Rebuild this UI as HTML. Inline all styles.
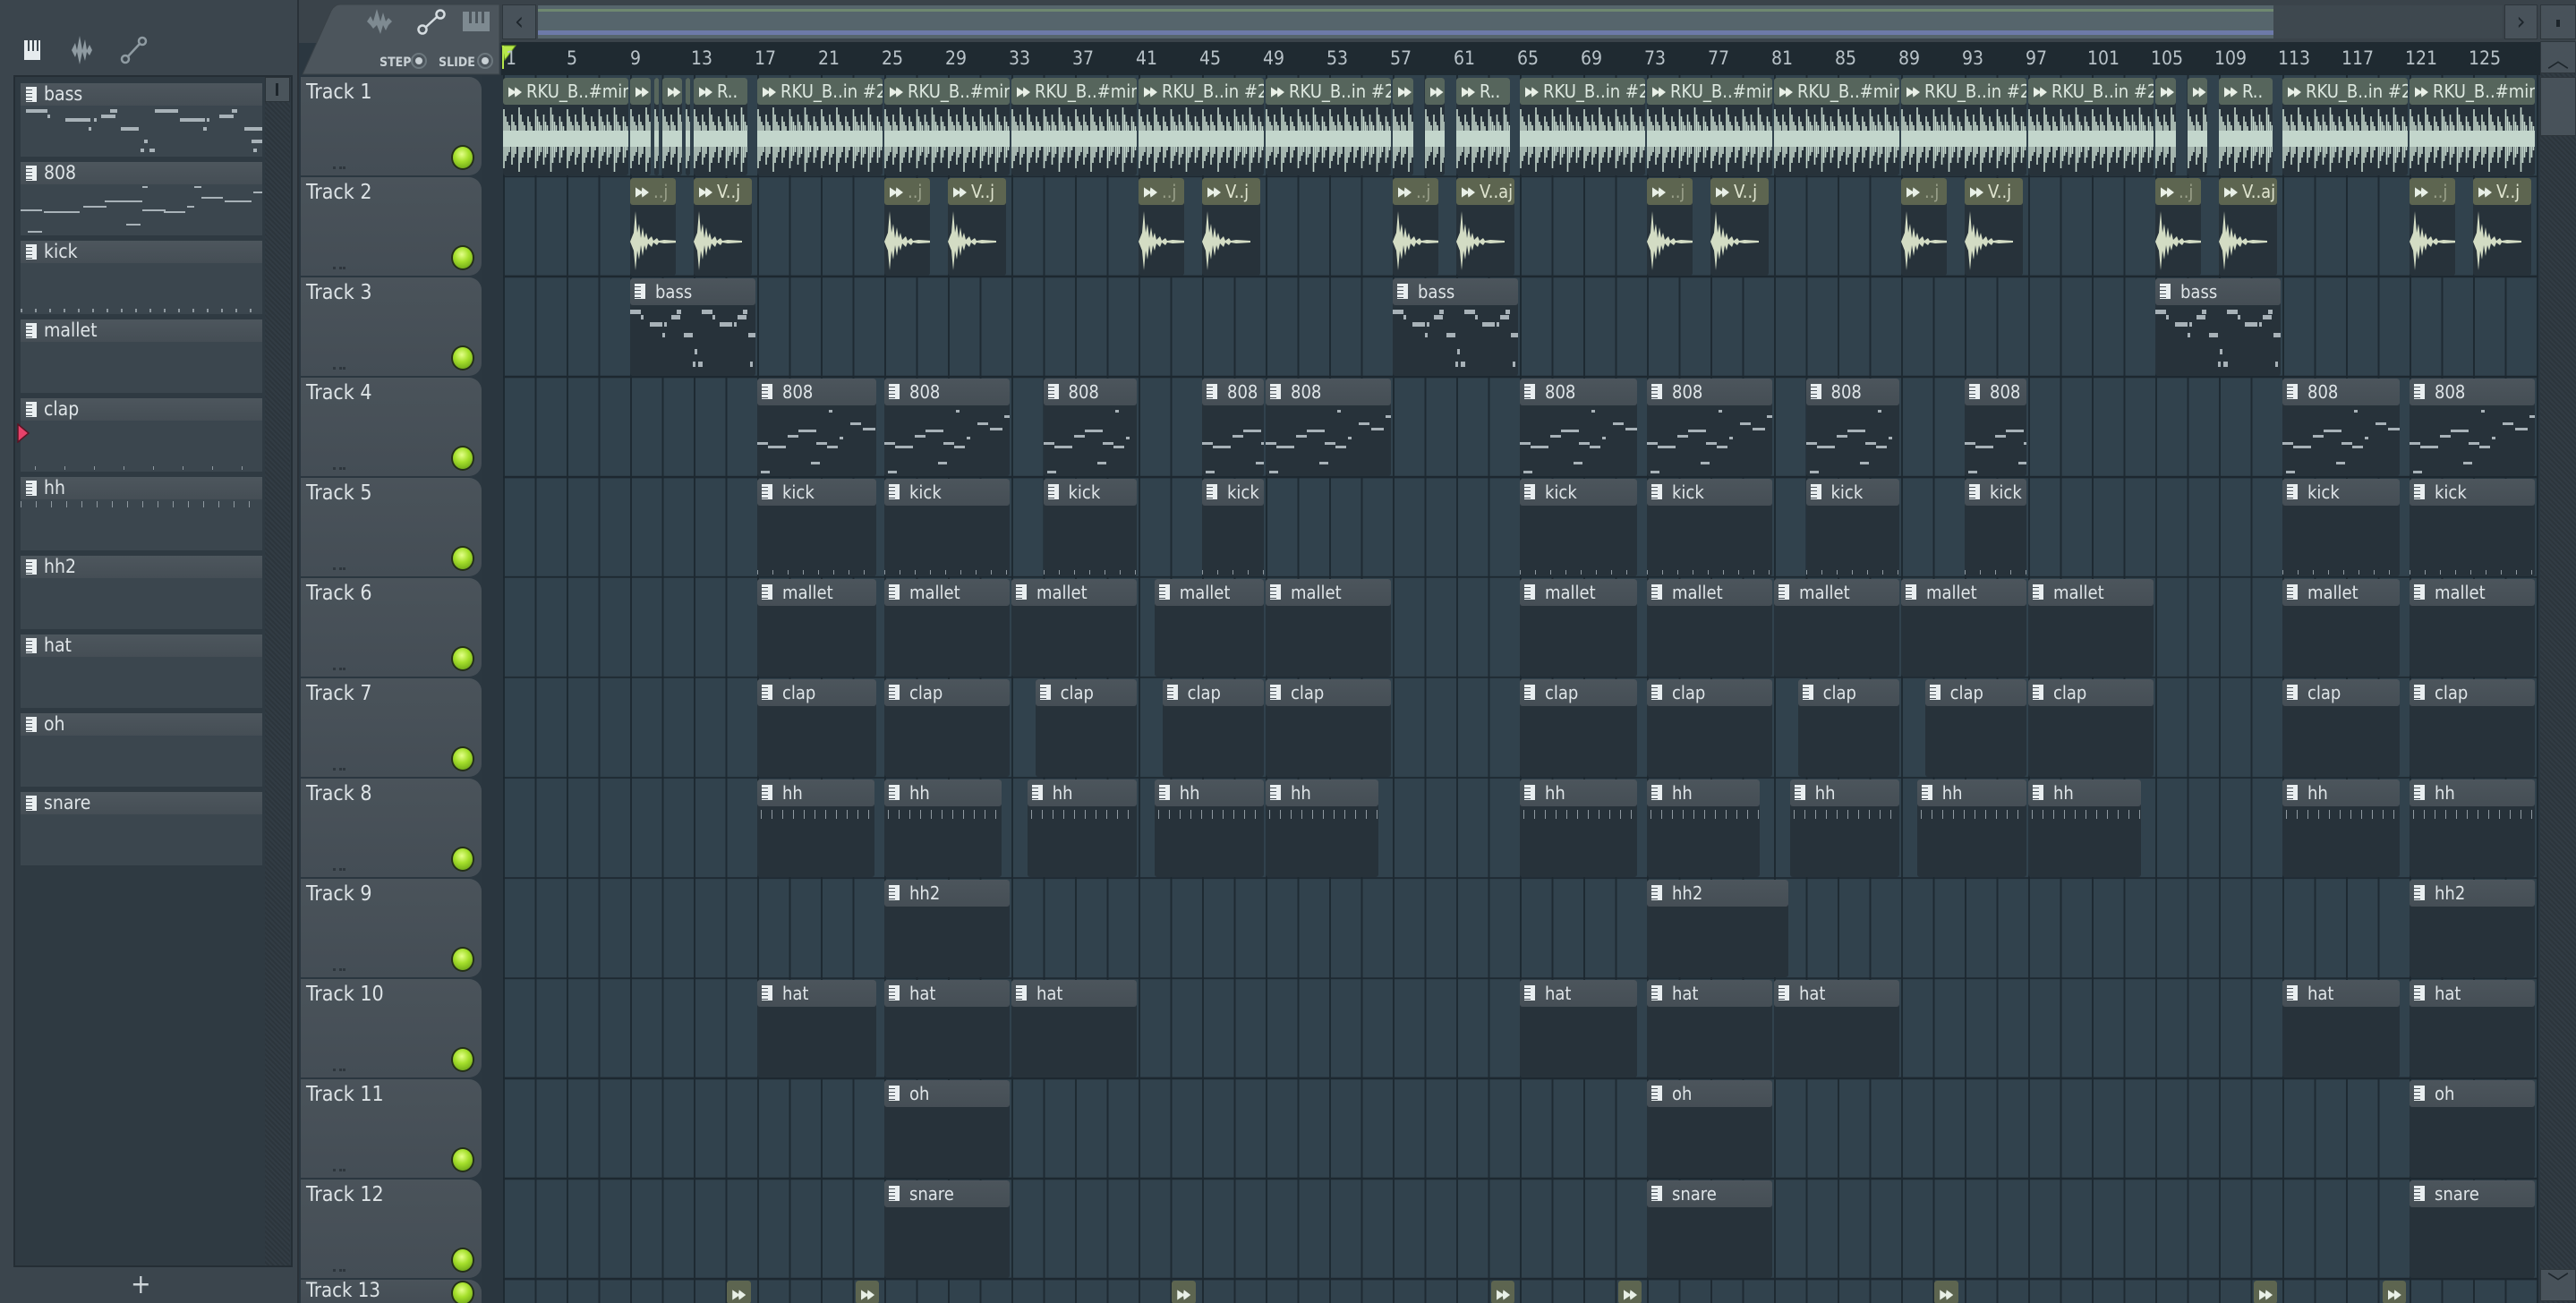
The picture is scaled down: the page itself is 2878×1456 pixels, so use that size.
<!DOCTYPE html>
<html style="margin:0;width:2878px;height:1456px;overflow:hidden"><head><meta charset="utf-8"><style>
*{box-sizing:border-box}
body{margin:0;width:2878px;height:1456px;background:#2b3740;overflow:hidden;position:relative;font-family:"DejaVu Sans Condensed","Liberation Sans",sans-serif;color:#d6dde1}
.ab{position:absolute}
#top{left:0;top:0;width:2878px;height:48px;background:#3a434a}
#leftp{left:0;top:0;width:334px;height:1456px;background:#3b454d;border-right:2px solid #2a3138}
#list{left:15px;top:84px;width:312px;height:1332px;background:#2f3a42;border:2px solid #252e35}
.it{position:absolute;left:6px;width:270px;height:82px;background:#3b464e}
.it .h{height:25px;background:linear-gradient(#4d565d,#454e55);font-size:21px;line-height:25px;padding-left:26px;position:relative;color:#dfe5e8}
.ic{position:absolute;left:6px;top:4px;width:12px;height:17px;background:repeating-linear-gradient(180deg,#e9eef0 0 3px,#4a535a 3px 4px);border-right:5px solid #e9eef0}
#lsb{left:296px;top:86px;width:28px;height:1328px;background:repeating-linear-gradient(45deg,#323c44 0 2px,#2c353c 2px 4px)}
#grid{left:562px;top:84px;width:2274px;height:1372px;background:
repeating-linear-gradient(180deg,transparent 0 110px,#1d2830 110px 112px),
repeating-linear-gradient(90deg,#1e2a32 0 2px,transparent 2px 35.5px),#31424d;background-position:0 2px,0 0,0 0}
#gcol{left:538px;top:84px;width:24px;height:1372px;background:#2a363f}
#ruler{left:560px;top:47px;width:2278px;height:37px;background:#1f2a31}
.n{position:absolute;top:6px;font-size:21px;color:#b8c2c8}
.th{position:absolute;left:336px;width:202px;height:110px;background:linear-gradient(#4a535a,#444d55);border-radius:0 14px 14px 0;overflow:hidden}
.th span{position:absolute;left:6px;top:4px;font-size:23px;color:#dde3e6}
.th i{position:absolute;left:36px;bottom:7px;width:14px;height:3px;border-left:3px solid #2e363d;border-right:3px solid #2e363d;background:linear-gradient(90deg,transparent 4px,#2e363d 4px 7px,transparent 7px)}
.th b{position:absolute;left:170px;bottom:8px;width:22px;height:24px;border-radius:50%;background:radial-gradient(circle at 45% 35%,#e4ff8a 0,#a6e02c 40%,#5c9410 100%);box-shadow:0 0 0 2px #243018}
.r{position:absolute;left:0;width:2878px;height:112px}
.c{position:absolute;top:1px;height:109px;left:calc(562px + var(--s)*17.75px);width:calc(var(--l)*17.75px - 2px);background:#27323a;border-radius:3px;overflow:hidden}
.c .h{height:30px;background:linear-gradient(#4c555c,#454e55);font-size:20px;line-height:30px;padding-left:28px;white-space:nowrap;position:relative;color:#dfe5e8;border-radius:3px}
.c .h .ic{left:5px;top:6px}
.a .h{background:#56655c;padding-left:6px;color:#dde8e0}
.o .h{background:#5d6550;padding-left:6px;color:#dfe4cf}
.o .h em{font-style:normal;color:#9aa08a}
.ar{display:inline-block;width:15px;height:14px;background:#e8efe6;margin-right:5px;vertical-align:-1px;clip-path:polygon(0 10%,45% 42%,50% 10%,100% 50%,50% 90%,45% 58%,0 90%)}
svg.w{position:absolute;left:0;top:31px}
.nb{position:absolute;left:0;top:31px}
.tk{position:absolute;left:0;bottom:2px;width:100%;height:5px;background:repeating-linear-gradient(90deg,#8f99a0 0 1px,transparent 1px 17px)}
.tt{position:absolute;left:4px;top:34px;width:100%;height:10px;background:repeating-linear-gradient(90deg,#8f99a0 0 1px,transparent 1px 12px)}
</style></head><body>
<svg width="0" height="0" style="position:absolute">
<defs>
<pattern id="wv" width="35.5" height="80" patternUnits="userSpaceOnUse">
<rect x="0" y="28" width="35.5" height="18" fill="#c3d6cc"/>
<g stroke="#c3d6cc" stroke-width="1.6">
<line x1="1" y1="4" x2="1" y2="70"/><line x1="3" y1="12" x2="3" y2="62"/><line x1="5" y1="18" x2="5" y2="56"/><line x1="7" y1="22" x2="7" y2="52"/>
<line x1="10" y1="10" x2="10" y2="66"/><line x1="12" y1="18" x2="12" y2="58"/><line x1="14" y1="22" x2="14" y2="54"/>
<line x1="18" y1="2" x2="18" y2="74"/><line x1="20" y1="10" x2="20" y2="64"/><line x1="22" y1="18" x2="22" y2="58"/><line x1="24" y1="22" x2="24" y2="52"/>
<line x1="28" y1="12" x2="28" y2="64"/><line x1="30" y1="18" x2="30" y2="58"/><line x1="32" y1="23" x2="32" y2="50"/></g>
</pattern>
<symbol id="burst" viewBox="0 0 54 76"><path d="M0 40 L4 30 L6 6 L8 30 L10 20 L12 36 L14 24 L16 36 L18 30 L20 38 L24 34 L26 39 L30 36 L32 39 L38 38 L54 39 L54 41 L38 42 L32 41 L30 44 L26 41 L24 46 L20 42 L18 50 L16 44 L14 56 L12 44 L10 60 L8 50 L6 72 L4 50 Z" fill="#d3dcc4"/></symbol>
<symbol id="bn" viewBox="0 0 140 78"><g fill="#a8b2b8"><rect x="0" y="4" width="12" height="5"/><rect x="12" y="10" width="3" height="5"/><rect x="22" y="18" width="14" height="5"/><rect x="38" y="18" width="3" height="5"/><rect x="36" y="30" width="3" height="5"/><rect x="46" y="10" width="10" height="5"/><rect x="52" y="4" width="5" height="5"/><rect x="60" y="30" width="10" height="5"/><rect x="72" y="48" width="3" height="6"/><rect x="70" y="62" width="3" height="6"/><rect x="76" y="62" width="5" height="6"/><rect x="80" y="4" width="12" height="5"/><rect x="92" y="10" width="3" height="5"/><rect x="100" y="18" width="14" height="5"/><rect x="116" y="18" width="3" height="5"/><rect x="120" y="10" width="10" height="5"/><rect x="126" y="4" width="5" height="5"/><rect x="132" y="30" width="8" height="5"/><rect x="134" y="62" width="3" height="6"/></g></symbol>
<symbol id="en" viewBox="0 0 140 78"><g fill="#a8b2b8"><rect x="0" y="40" width="12" height="3"/><rect x="12" y="44" width="20" height="3"/><rect x="34" y="32" width="12" height="3"/><rect x="46" y="26" width="20" height="3"/><rect x="66" y="40" width="12" height="3"/><rect x="78" y="44" width="12" height="3"/><rect x="92" y="34" width="4" height="3"/><rect x="104" y="18" width="12" height="3"/><rect x="118" y="24" width="14" height="3"/><rect x="134" y="10" width="6" height="3"/><rect x="60" y="62" width="10" height="3"/><rect x="4" y="72" width="10" height="3"/><rect x="80" y="4" width="4" height="3"/></g></symbol>
</defs></svg>

<div class="ab" id="top"></div>
<div class="ab" style="left:601px;top:6px;width:1939px;height:37px;background:#56656c"></div>
<div class="ab" style="left:601px;top:34px;width:1939px;height:5px;background:#6d7aa8"></div>
<div class="ab" style="left:601px;top:10px;width:1939px;height:3px;background:#6f8870"></div>
<div class="ab" style="left:2540px;top:6px;width:256px;height:37px;background:#3e484f"></div>
<div class="ab" style="left:561px;top:5px;width:38px;height:39px;background:#48525a;border:1px solid #2e363c;font-size:28px;text-align:center;line-height:36px;color:#1d252b">‹</div>
<div class="ab" style="left:2798px;top:5px;width:37px;height:39px;background:#48525a;border:1px solid #2e363c;font-size:28px;text-align:center;line-height:36px;color:#1d252b">›</div>
<div class="ab" style="left:2838px;top:5px;width:40px;height:39px;background:#48525a;border:1px solid #2e363c"><div class="ab" style="left:17px;top:16px;width:4px;height:8px;background:#1d252b"></div></div>
<div class="ab" style="left:2838px;top:46px;width:40px;height:1410px;background:repeating-linear-gradient(45deg,#323c44 0 2px,#2c353c 2px 4px)"></div>
<div class="ab" style="left:2838px;top:46px;width:40px;height:36px;background:#48525a;border:1px solid #2e363c;text-align:center;font-size:24px;line-height:40px;color:#1d252b">︿</div>
<div class="ab" style="left:2838px;top:86px;width:40px;height:66px;background:#48525a;border:1px solid #2e363c"></div>
<div class="ab" style="left:2838px;top:1418px;width:40px;height:36px;background:#48525a;border:1px solid #2e363c;text-align:center;font-size:24px;line-height:30px;color:#1d252b">﹀</div>

<div class="ab" id="leftp"></div>
<svg class="ab" style="left:0;top:0" width="334" height="84">
<g fill="#e6ebee"><rect x="27" y="45" width="18" height="22"/></g>
<g fill="#3b454d"><rect x="31" y="45" width="2" height="12"/><rect x="36" y="45" width="2" height="12"/><rect x="41" y="45" width="2" height="12"/></g>
<path d="M80 56 L84 48 L86 56 L89 40 L92 56 L95 44 L97 56 L100 50 L103 56 L100 62 L97 58 L95 68 L92 58 L89 72 L86 58 L84 64 Z" fill="#8f9ba2"/>
<g stroke="#8f9ba2" stroke-width="2.5" fill="none"><circle cx="140" cy="66" r="4"/><circle cx="159" cy="46" r="4"/><line x1="143" y1="63" x2="156" y2="49"/></g>
</svg>
<svg class="ab" style="left:330px;top:0" width="232" height="86">
<path d="M50 5 L228 5 L228 83 L8 83 L40 12 Q44 5 50 5 Z" fill="#4c555c" stroke="#3a4248"/>
<path d="M80 24 L84 18 L87 24 L91 10 L95 24 L98 14 L101 24 L104 20 L108 24 L104 28 L101 34 L98 28 L95 38 L91 28 L87 32 L84 28 Z" fill="#7e8a91"/>
<g stroke="#d5dce0" stroke-width="2.5" fill="none"><circle cx="142" cy="33" r="4.5"/><circle cx="162" cy="16" r="4.5"/><line x1="146" y1="30" x2="158" y2="19"/></g>
<rect x="187" y="13" width="30" height="22" fill="#7e8a91"/><g fill="#4c555c"><rect x="194" y="13" width="3" height="13"/><rect x="201" y="13" width="3" height="13"/><rect x="208" y="13" width="3" height="13"/></g>
<text x="94" y="74" font-size="14" fill="#c8d0d4" font-family="DejaVu Sans Condensed,Liberation Sans,sans-serif" font-weight="bold">STEP</text>
<circle cx="138" cy="68" r="8" fill="none" stroke="#6c777d" stroke-width="2"/><circle cx="138" cy="68" r="4" fill="#c8d0d4"/>
<text x="160" y="74" font-size="14" fill="#c8d0d4" font-family="DejaVu Sans Condensed,Liberation Sans,sans-serif" font-weight="bold">SLIDE</text>
<circle cx="212" cy="68" r="8" fill="none" stroke="#6c777d" stroke-width="2"/><circle cx="212" cy="68" r="4" fill="#c8d0d4"/>
</svg>

<div class="ab" id="list">
<div class="it" style="top:7px"><div class="h"><s class="ic"></s>bass</div>
<svg width="270" height="57"><g fill="#a8b2b8"><rect x="6" y="4" width="24" height="4"/><rect x="30" y="10" width="3" height="4"/><rect x="50" y="14" width="28" height="4"/><rect x="82" y="14" width="3" height="4"/><rect x="76" y="24" width="3" height="4"/><rect x="90" y="10" width="16" height="4"/><rect x="100" y="4" width="8" height="4"/><rect x="112" y="24" width="20" height="4"/><rect x="138" y="38" width="4" height="4"/><rect x="134" y="48" width="4" height="4"/><rect x="144" y="48" width="6" height="4"/><rect x="150" y="4" width="26" height="4"/><rect x="178" y="14" width="28" height="4"/><rect x="208" y="14" width="3" height="4"/><rect x="204" y="24" width="4" height="4"/><rect x="222" y="10" width="16" height="4"/><rect x="236" y="4" width="6" height="4"/><rect x="250" y="24" width="20" height="4"/><rect x="258" y="38" width="12" height="4"/><rect x="260" y="48" width="4" height="4"/></g></svg></div>
<div class="it" style="top:95px"><div class="h"><s class="ic"></s>808</div>
<svg width="270" height="57"><g fill="#a8b2b8"><rect x="0" y="28" width="24" height="2"/><rect x="26" y="30" width="40" height="2"/><rect x="70" y="24" width="26" height="2"/><rect x="94" y="18" width="42" height="2"/><rect x="136" y="28" width="26" height="2"/><rect x="160" y="30" width="24" height="2"/><rect x="186" y="24" width="8" height="2"/><rect x="202" y="14" width="24" height="2"/><rect x="228" y="18" width="30" height="2"/><rect x="260" y="8" width="10" height="2"/><rect x="118" y="44" width="16" height="2"/><rect x="8" y="52" width="16" height="2"/><rect x="136" y="2" width="6" height="2"/><rect x="194" y="2" width="8" height="2"/></g></svg></div>
<div class="it" style="top:183px"><div class="h"><s class="ic"></s>kick</div><div style="position:absolute;left:0;bottom:2px;width:270px;height:4px;background:repeating-linear-gradient(90deg,#8f99a0 0 2px,transparent 2px 16px)"></div></div>
<div class="it" style="top:271px"><div class="h"><s class="ic"></s>mallet</div></div>
<div class="it" style="top:359px"><div class="h"><s class="ic"></s>clap</div><div style="position:absolute;left:0;bottom:2px;width:270px;height:4px;background:repeating-linear-gradient(90deg,transparent 0 16px,#8f99a0 16px 17px,transparent 17px 33px)"></div></div>
<div class="it" style="top:447px"><div class="h"><s class="ic"></s>hh</div><div style="position:absolute;left:0;top:27px;width:270px;height:7px;background:repeating-linear-gradient(90deg,#8f99a0 0 1px,transparent 1px 17px)"></div></div>
<div class="it" style="top:535px"><div class="h"><s class="ic"></s>hh2</div></div>
<div class="it" style="top:623px"><div class="h"><s class="ic"></s>hat</div></div>
<div class="it" style="top:711px"><div class="h"><s class="ic"></s>oh</div></div>
<div class="it" style="top:799px"><div class="h"><s class="ic"></s>snare</div></div>
</div>
<div class="ab" id="lsb"></div>
<div class="ab" style="left:296px;top:86px;width:28px;height:28px;background:#4a545b;border:1px solid #2a3238"><div class="ab" style="left:11px;top:6px;width:3px;height:14px;background:#1d252b"></div></div>
<svg class="ab" style="left:18px;top:473px" width="16" height="22"><path d="M2 1 L14 11 L2 21 Z" fill="#e8426a" stroke="#5a1424" stroke-width="1.5"/></svg>
<div class="ab" style="left:146px;top:1418px;font-size:30px;color:#cfd6da">+</div>

<div class="ab" id="gcol"></div>
<div class="ab" id="grid"></div>
<div class="ab" id="ruler">
<svg class="ab" style="left:0;top:2px" width="20" height="30"><path d="M1 2 L16 2 L4 18 Z" fill="#b7e84a" stroke="#6a9a20"/><rect x="1" y="2" width="2" height="26" fill="#b7e84a"/></svg>
<span class="n" style="left:5px">1</span><span class="n" style="left:73px">5</span><span class="n" style="left:144px">9</span><span class="n" style="left:212px">13</span><span class="n" style="left:283px">17</span><span class="n" style="left:354px">21</span><span class="n" style="left:425px">25</span><span class="n" style="left:496px">29</span><span class="n" style="left:567px">33</span><span class="n" style="left:638px">37</span><span class="n" style="left:709px">41</span><span class="n" style="left:780px">45</span><span class="n" style="left:851px">49</span><span class="n" style="left:922px">53</span><span class="n" style="left:993px">57</span><span class="n" style="left:1064px">61</span><span class="n" style="left:1135px">65</span><span class="n" style="left:1206px">69</span><span class="n" style="left:1277px">73</span><span class="n" style="left:1348px">77</span><span class="n" style="left:1419px">81</span><span class="n" style="left:1490px">85</span><span class="n" style="left:1561px">89</span><span class="n" style="left:1632px">93</span><span class="n" style="left:1703px">97</span><span class="n" style="left:1772px">101</span><span class="n" style="left:1843px">105</span><span class="n" style="left:1914px">109</span><span class="n" style="left:1985px">113</span><span class="n" style="left:2056px">117</span><span class="n" style="left:2127px">121</span><span class="n" style="left:2198px">125</span>
</div>

<div class="th" style="top:86px"><span>Track 1</span><i></i><b></b></div>
<div class="th" style="top:198px"><span>Track 2</span><i></i><b></b></div>
<div class="th" style="top:310px"><span>Track 3</span><i></i><b></b></div>
<div class="th" style="top:422px"><span>Track 4</span><i></i><b></b></div>
<div class="th" style="top:534px"><span>Track 5</span><i></i><b></b></div>
<div class="th" style="top:646px"><span>Track 6</span><i></i><b></b></div>
<div class="th" style="top:758px"><span>Track 7</span><i></i><b></b></div>
<div class="th" style="top:870px"><span>Track 8</span><i></i><b></b></div>
<div class="th" style="top:982px"><span>Track 9</span><i></i><b></b></div>
<div class="th" style="top:1094px"><span>Track 10</span><i></i><b></b></div>
<div class="th" style="top:1206px"><span>Track 11</span><i></i><b></b></div>
<div class="th" style="top:1318px"><span>Track 12</span><i></i><b></b></div>
<div class="th" style="top:1430px;height:26px;border-radius:0 14px 0 0"><span style="top:0;font-size:22px">Track 13</span><b style="bottom:auto;top:3px"></b></div>

<!-- Track 1 -->
<div class="r" style="top:86px">
<div class="c a" style="--s:0;--l:8"><div class="h"><s class="ar"></s>RKU_B..#min</div><svg class="w" width="200" height="80"><rect width="200" height="80" fill="url(#wv)"/></svg></div>
<div class="c a" style="--s:8;--l:1.4"><div class="h"><s class="ar"></s></div><svg class="w" width="200" height="80"><rect width="200" height="80" fill="url(#wv)"/></svg></div>
<div class="c a" style="--s:9.5;--l:0.4"><div class="h"></div><svg class="w" width="200" height="80"><rect width="200" height="80" fill="url(#wv)"/></svg></div>
<div class="c a" style="--s:10;--l:1.4"><div class="h"><s class="ar"></s></div><svg class="w" width="200" height="80"><rect width="200" height="80" fill="url(#wv)"/></svg></div>
<div class="c a" style="--s:11.5;--l:0.4"><div class="h"></div><svg class="w" width="200" height="80"><rect width="200" height="80" fill="url(#wv)"/></svg></div>
<div class="c a" style="--s:12;--l:3.5"><div class="h"><s class="ar"></s>R..</div><svg class="w" width="200" height="80"><rect width="200" height="80" fill="url(#wv)"/></svg></div>
<div class="c a" style="--s:16;--l:8"><div class="h"><s class="ar"></s>RKU_B..in #2</div><svg class="w" width="200" height="80"><rect width="200" height="80" fill="url(#wv)"/></svg></div>
<div class="c a" style="--s:24;--l:8"><div class="h"><s class="ar"></s>RKU_B..#min</div><svg class="w" width="200" height="80"><rect width="200" height="80" fill="url(#wv)"/></svg></div>
<div class="c a" style="--s:32;--l:8"><div class="h"><s class="ar"></s>RKU_B..#min</div><svg class="w" width="200" height="80"><rect width="200" height="80" fill="url(#wv)"/></svg></div>
<div class="c a" style="--s:40;--l:8"><div class="h"><s class="ar"></s>RKU_B..in #2</div><svg class="w" width="200" height="80"><rect width="200" height="80" fill="url(#wv)"/></svg></div>
<div class="c a" style="--s:48;--l:8"><div class="h"><s class="ar"></s>RKU_B..in #2</div><svg class="w" width="200" height="80"><rect width="200" height="80" fill="url(#wv)"/></svg></div>
<div class="c a" style="--s:56;--l:1.4"><div class="h"><s class="ar"></s></div><svg class="w" width="200" height="80"><rect width="200" height="80" fill="url(#wv)"/></svg></div>
<div class="c a" style="--s:58;--l:1.4"><div class="h"><s class="ar"></s></div><svg class="w" width="200" height="80"><rect width="200" height="80" fill="url(#wv)"/></svg></div>
<div class="c a" style="--s:60;--l:3.5"><div class="h"><s class="ar"></s>R..</div><svg class="w" width="200" height="80"><rect width="200" height="80" fill="url(#wv)"/></svg></div>
<div class="c a" style="--s:64;--l:8"><div class="h"><s class="ar"></s>RKU_B..in #2</div><svg class="w" width="200" height="80"><rect width="200" height="80" fill="url(#wv)"/></svg></div>
<div class="c a" style="--s:72;--l:8"><div class="h"><s class="ar"></s>RKU_B..#min</div><svg class="w" width="200" height="80"><rect width="200" height="80" fill="url(#wv)"/></svg></div>
<div class="c a" style="--s:80;--l:8"><div class="h"><s class="ar"></s>RKU_B..#min</div><svg class="w" width="200" height="80"><rect width="200" height="80" fill="url(#wv)"/></svg></div>
<div class="c a" style="--s:88;--l:8"><div class="h"><s class="ar"></s>RKU_B..in #2</div><svg class="w" width="200" height="80"><rect width="200" height="80" fill="url(#wv)"/></svg></div>
<div class="c a" style="--s:96;--l:8"><div class="h"><s class="ar"></s>RKU_B..in #2</div><svg class="w" width="200" height="80"><rect width="200" height="80" fill="url(#wv)"/></svg></div>
<div class="c a" style="--s:104;--l:1.4"><div class="h"><s class="ar"></s></div><svg class="w" width="200" height="80"><rect width="200" height="80" fill="url(#wv)"/></svg></div>
<div class="c a" style="--s:106;--l:1.4"><div class="h"><s class="ar"></s></div><svg class="w" width="200" height="80"><rect width="200" height="80" fill="url(#wv)"/></svg></div>
<div class="c a" style="--s:108;--l:3.5"><div class="h"><s class="ar"></s>R..</div><svg class="w" width="200" height="80"><rect width="200" height="80" fill="url(#wv)"/></svg></div>
<div class="c a" style="--s:112;--l:8"><div class="h"><s class="ar"></s>RKU_B..in #2</div><svg class="w" width="200" height="80"><rect width="200" height="80" fill="url(#wv)"/></svg></div>
<div class="c a" style="--s:120;--l:8"><div class="h"><s class="ar"></s>RKU_B..#min</div><svg class="w" width="200" height="80"><rect width="200" height="80" fill="url(#wv)"/></svg></div>
</div>

<!-- Track 2 -->
<div class="r" style="top:198px">
<div class="c o" style="--s:8;--l:3"><div class="h"><s class="ar"></s><em>..j</em></div><svg class="w" width="54" height="76"><use href="#burst"/></svg></div>
<div class="c o" style="--s:12;--l:3.8"><div class="h"><s class="ar"></s>V..j</div><svg class="w" width="54" height="76"><use href="#burst"/></svg></div>
<div class="c o" style="--s:24;--l:3"><div class="h"><s class="ar"></s><em>..j</em></div><svg class="w" width="54" height="76"><use href="#burst"/></svg></div>
<div class="c o" style="--s:28;--l:3.8"><div class="h"><s class="ar"></s>V..j</div><svg class="w" width="54" height="76"><use href="#burst"/></svg></div>
<div class="c o" style="--s:40;--l:3"><div class="h"><s class="ar"></s><em>..j</em></div><svg class="w" width="54" height="76"><use href="#burst"/></svg></div>
<div class="c o" style="--s:44;--l:3.8"><div class="h"><s class="ar"></s>V..j</div><svg class="w" width="54" height="76"><use href="#burst"/></svg></div>
<div class="c o" style="--s:56;--l:3"><div class="h"><s class="ar"></s><em>..j</em></div><svg class="w" width="54" height="76"><use href="#burst"/></svg></div>
<div class="c o" style="--s:60;--l:3.8"><div class="h"><s class="ar"></s>V..aj</div><svg class="w" width="54" height="76"><use href="#burst"/></svg></div>
<div class="c o" style="--s:72;--l:3"><div class="h"><s class="ar"></s><em>..j</em></div><svg class="w" width="54" height="76"><use href="#burst"/></svg></div>
<div class="c o" style="--s:76;--l:3.8"><div class="h"><s class="ar"></s>V..j</div><svg class="w" width="54" height="76"><use href="#burst"/></svg></div>
<div class="c o" style="--s:88;--l:3"><div class="h"><s class="ar"></s><em>..j</em></div><svg class="w" width="54" height="76"><use href="#burst"/></svg></div>
<div class="c o" style="--s:92;--l:3.8"><div class="h"><s class="ar"></s>V..j</div><svg class="w" width="54" height="76"><use href="#burst"/></svg></div>
<div class="c o" style="--s:104;--l:3"><div class="h"><s class="ar"></s><em>..j</em></div><svg class="w" width="54" height="76"><use href="#burst"/></svg></div>
<div class="c o" style="--s:108;--l:3.8"><div class="h"><s class="ar"></s>V..aj</div><svg class="w" width="54" height="76"><use href="#burst"/></svg></div>
<div class="c o" style="--s:120;--l:3"><div class="h"><s class="ar"></s><em>..j</em></div><svg class="w" width="54" height="76"><use href="#burst"/></svg></div>
<div class="c o" style="--s:124;--l:3.8"><div class="h"><s class="ar"></s>V..j</div><svg class="w" width="54" height="76"><use href="#burst"/></svg></div>
</div>

<!-- Track 3 -->
<div class="r" style="top:310px">
<div class="c" style="--s:8;--l:8"><div class="h"><s class="ic"></s>bass</div><svg class="nb" width="140" height="78"><use href="#bn"/></svg></div>
<div class="c" style="--s:56;--l:8"><div class="h"><s class="ic"></s>bass</div><svg class="nb" width="140" height="78"><use href="#bn"/></svg></div>
<div class="c" style="--s:104;--l:8"><div class="h"><s class="ic"></s>bass</div><svg class="nb" width="140" height="78"><use href="#bn"/></svg></div>
</div>
<!-- Track 4 -->
<div class="r" style="top:422px">
<div class="c" style="--s:16;--l:7.6"><div class="h"><s class="ic"></s>808</div><svg class="nb" width="140" height="78"><use href="#en"/></svg></div>
<div class="c" style="--s:24;--l:8"><div class="h"><s class="ic"></s>808</div><svg class="nb" width="140" height="78"><use href="#en"/></svg></div>
<div class="c" style="--s:34;--l:6"><div class="h"><s class="ic"></s>808</div><svg class="nb" width="140" height="78"><use href="#en"/></svg></div>
<div class="c" style="--s:44;--l:4"><div class="h"><s class="ic"></s>808</div><svg class="nb" width="140" height="78"><use href="#en"/></svg></div>
<div class="c" style="--s:48;--l:8"><div class="h"><s class="ic"></s>808</div><svg class="nb" width="140" height="78"><use href="#en"/></svg></div>
<div class="c" style="--s:64;--l:7.5"><div class="h"><s class="ic"></s>808</div><svg class="nb" width="140" height="78"><use href="#en"/></svg></div>
<div class="c" style="--s:72;--l:8"><div class="h"><s class="ic"></s>808</div><svg class="nb" width="140" height="78"><use href="#en"/></svg></div>
<div class="c" style="--s:82;--l:6"><div class="h"><s class="ic"></s>808</div><svg class="nb" width="140" height="78"><use href="#en"/></svg></div>
<div class="c" style="--s:92;--l:4"><div class="h"><s class="ic"></s>808</div><svg class="nb" width="140" height="78"><use href="#en"/></svg></div>
<div class="c" style="--s:112;--l:7.5"><div class="h"><s class="ic"></s>808</div><svg class="nb" width="140" height="78"><use href="#en"/></svg></div>
<div class="c" style="--s:120;--l:8"><div class="h"><s class="ic"></s>808</div><svg class="nb" width="140" height="78"><use href="#en"/></svg></div>
</div>
<!-- Track 5 -->
<div class="r" style="top:534px">
<div class="c" style="--s:16;--l:7.6"><div class="h"><s class="ic"></s>kick</div><s class="tk"></s></div>
<div class="c" style="--s:24;--l:8"><div class="h"><s class="ic"></s>kick</div><s class="tk"></s></div>
<div class="c" style="--s:34;--l:6"><div class="h"><s class="ic"></s>kick</div><s class="tk"></s></div>
<div class="c" style="--s:44;--l:4"><div class="h"><s class="ic"></s>kick</div><s class="tk"></s></div>
<div class="c" style="--s:64;--l:7.5"><div class="h"><s class="ic"></s>kick</div><s class="tk"></s></div>
<div class="c" style="--s:72;--l:8"><div class="h"><s class="ic"></s>kick</div><s class="tk"></s></div>
<div class="c" style="--s:82;--l:6"><div class="h"><s class="ic"></s>kick</div><s class="tk"></s></div>
<div class="c" style="--s:92;--l:4"><div class="h"><s class="ic"></s>kick</div><s class="tk"></s></div>
<div class="c" style="--s:112;--l:7.5"><div class="h"><s class="ic"></s>kick</div><s class="tk"></s></div>
<div class="c" style="--s:120;--l:8"><div class="h"><s class="ic"></s>kick</div><s class="tk"></s></div>
</div>
<!-- Track 6 -->
<div class="r" style="top:646px">
<div class="c" style="--s:16;--l:7.6"><div class="h"><s class="ic"></s>mallet</div></div>
<div class="c" style="--s:24;--l:8"><div class="h"><s class="ic"></s>mallet</div></div>
<div class="c" style="--s:32;--l:8"><div class="h"><s class="ic"></s>mallet</div></div>
<div class="c" style="--s:41;--l:7"><div class="h"><s class="ic"></s>mallet</div></div>
<div class="c" style="--s:48;--l:8"><div class="h"><s class="ic"></s>mallet</div></div>
<div class="c" style="--s:64;--l:7.5"><div class="h"><s class="ic"></s>mallet</div></div>
<div class="c" style="--s:72;--l:8"><div class="h"><s class="ic"></s>mallet</div></div>
<div class="c" style="--s:80;--l:8"><div class="h"><s class="ic"></s>mallet</div></div>
<div class="c" style="--s:88;--l:8"><div class="h"><s class="ic"></s>mallet</div></div>
<div class="c" style="--s:96;--l:8"><div class="h"><s class="ic"></s>mallet</div></div>
<div class="c" style="--s:112;--l:7.5"><div class="h"><s class="ic"></s>mallet</div></div>
<div class="c" style="--s:120;--l:8"><div class="h"><s class="ic"></s>mallet</div></div>
</div>
<!-- Track 7 -->
<div class="r" style="top:758px">
<div class="c" style="--s:16;--l:7.6"><div class="h"><s class="ic"></s>clap</div></div>
<div class="c" style="--s:24;--l:8"><div class="h"><s class="ic"></s>clap</div></div>
<div class="c" style="--s:33.5;--l:6.5"><div class="h"><s class="ic"></s>clap</div></div>
<div class="c" style="--s:41.5;--l:6.5"><div class="h"><s class="ic"></s>clap</div></div>
<div class="c" style="--s:48;--l:8"><div class="h"><s class="ic"></s>clap</div></div>
<div class="c" style="--s:64;--l:7.5"><div class="h"><s class="ic"></s>clap</div></div>
<div class="c" style="--s:72;--l:8"><div class="h"><s class="ic"></s>clap</div></div>
<div class="c" style="--s:81.5;--l:6.5"><div class="h"><s class="ic"></s>clap</div></div>
<div class="c" style="--s:89.5;--l:6.5"><div class="h"><s class="ic"></s>clap</div></div>
<div class="c" style="--s:96;--l:8"><div class="h"><s class="ic"></s>clap</div></div>
<div class="c" style="--s:112;--l:7.5"><div class="h"><s class="ic"></s>clap</div></div>
<div class="c" style="--s:120;--l:8"><div class="h"><s class="ic"></s>clap</div></div>
</div>
<!-- Track 8 -->
<div class="r" style="top:870px">
<div class="c" style="--s:16;--l:7.5"><div class="h"><s class="ic"></s>hh</div><s class="tt"></s></div>
<div class="c" style="--s:24;--l:7.5"><div class="h"><s class="ic"></s>hh</div><s class="tt"></s></div>
<div class="c" style="--s:33;--l:7"><div class="h"><s class="ic"></s>hh</div><s class="tt"></s></div>
<div class="c" style="--s:41;--l:7"><div class="h"><s class="ic"></s>hh</div><s class="tt"></s></div>
<div class="c" style="--s:48;--l:7.2"><div class="h"><s class="ic"></s>hh</div><s class="tt"></s></div>
<div class="c" style="--s:64;--l:7.5"><div class="h"><s class="ic"></s>hh</div><s class="tt"></s></div>
<div class="c" style="--s:72;--l:7.2"><div class="h"><s class="ic"></s>hh</div><s class="tt"></s></div>
<div class="c" style="--s:81;--l:7"><div class="h"><s class="ic"></s>hh</div><s class="tt"></s></div>
<div class="c" style="--s:89;--l:7"><div class="h"><s class="ic"></s>hh</div><s class="tt"></s></div>
<div class="c" style="--s:96;--l:7.2"><div class="h"><s class="ic"></s>hh</div><s class="tt"></s></div>
<div class="c" style="--s:112;--l:7.5"><div class="h"><s class="ic"></s>hh</div><s class="tt"></s></div>
<div class="c" style="--s:120;--l:8"><div class="h"><s class="ic"></s>hh</div><s class="tt"></s></div>
</div>
<!-- Track 9 -->
<div class="r" style="top:982px">
<div class="c" style="--s:24;--l:8"><div class="h"><s class="ic"></s>hh2</div></div>
<div class="c" style="--s:72;--l:9"><div class="h"><s class="ic"></s>hh2</div></div>
<div class="c" style="--s:120;--l:8"><div class="h"><s class="ic"></s>hh2</div></div>
</div>
<!-- Track 10 -->
<div class="r" style="top:1094px">
<div class="c" style="--s:16;--l:7.6"><div class="h"><s class="ic"></s>hat</div></div>
<div class="c" style="--s:24;--l:8"><div class="h"><s class="ic"></s>hat</div></div>
<div class="c" style="--s:32;--l:8"><div class="h"><s class="ic"></s>hat</div></div>
<div class="c" style="--s:64;--l:7.5"><div class="h"><s class="ic"></s>hat</div></div>
<div class="c" style="--s:72;--l:8"><div class="h"><s class="ic"></s>hat</div></div>
<div class="c" style="--s:80;--l:8"><div class="h"><s class="ic"></s>hat</div></div>
<div class="c" style="--s:112;--l:7.5"><div class="h"><s class="ic"></s>hat</div></div>
<div class="c" style="--s:120;--l:8"><div class="h"><s class="ic"></s>hat</div></div>
</div>
<!-- Track 11 -->
<div class="r" style="top:1206px">
<div class="c" style="--s:24;--l:8"><div class="h"><s class="ic"></s>oh</div></div>
<div class="c" style="--s:72;--l:8"><div class="h"><s class="ic"></s>oh</div></div>
<div class="c" style="--s:120;--l:8"><div class="h"><s class="ic"></s>oh</div></div>
</div>
<!-- Track 12 -->
<div class="r" style="top:1318px">
<div class="c" style="--s:24;--l:8"><div class="h"><s class="ic"></s>snare</div></div>
<div class="c" style="--s:72;--l:8"><div class="h"><s class="ic"></s>snare</div></div>
<div class="c" style="--s:120;--l:8"><div class="h"><s class="ic"></s>snare</div></div>
</div>
<!-- Track 13 -->
<div class="r" style="top:1430px;height:26px;overflow:hidden">
<div class="c o" style="--s:14.1;--l:1.6;height:26px"><div class="h" style="padding-left:6px"><s class="ar"></s></div></div>
<div class="c o" style="--s:22.2;--l:1.6;height:26px"><div class="h" style="padding-left:6px"><s class="ar"></s></div></div>
<div class="c o" style="--s:42.1;--l:1.6;height:26px"><div class="h" style="padding-left:6px"><s class="ar"></s></div></div>
<div class="c o" style="--s:62.2;--l:1.6;height:26px"><div class="h" style="padding-left:6px"><s class="ar"></s></div></div>
<div class="c o" style="--s:70.2;--l:1.6;height:26px"><div class="h" style="padding-left:6px"><s class="ar"></s></div></div>
<div class="c o" style="--s:90.1;--l:1.6;height:26px"><div class="h" style="padding-left:6px"><s class="ar"></s></div></div>
<div class="c o" style="--s:110.2;--l:1.6;height:26px"><div class="h" style="padding-left:6px"><s class="ar"></s></div></div>
<div class="c o" style="--s:118.3;--l:1.6;height:26px"><div class="h" style="padding-left:6px"><s class="ar"></s></div></div>
</div>
</body></html>
